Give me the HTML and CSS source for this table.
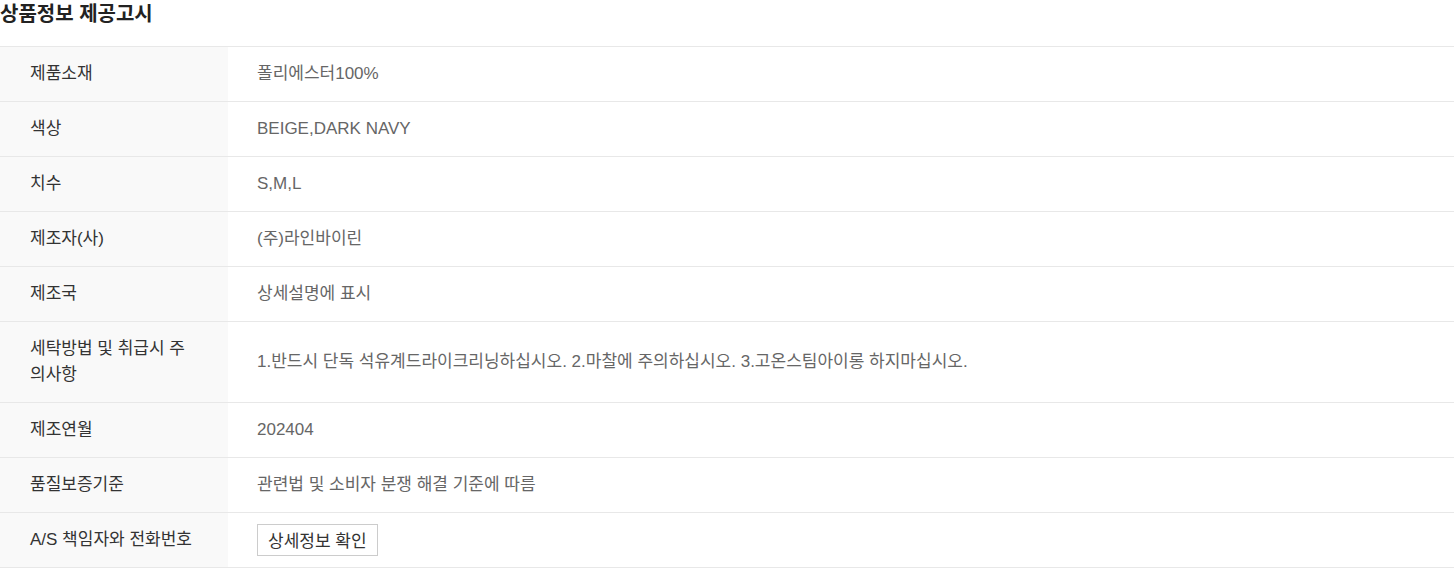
FILE: index.html
```html
<!DOCTYPE html>
<html lang="ko">
<head>
<meta charset="utf-8">
<title>상품정보 제공고시</title>
<link rel="stylesheet" href="styles.css">
</head>
<body>
<section class="notice">
  <h3 class="notice-title">상품정보 제공고시</h3>
  <div class="notice-table">
    <div class="row"><div class="label">제품소재</div><div class="value">폴리에스터100%</div></div>
    <div class="row"><div class="label">색상</div><div class="value">BEIGE,DARK NAVY</div></div>
    <div class="row"><div class="label">치수</div><div class="value">S,M,L</div></div>
    <div class="row"><div class="label">제조자(사)</div><div class="value">(주)라인바이린</div></div>
    <div class="row"><div class="label">제조국</div><div class="value">상세설명에 표시</div></div>
    <div class="row"><div class="label">세탁방법 및 취급시 주의사항</div><div class="value">1.반드시 단독 석유계드라이크리닝하십시오. 2.마찰에 주의하십시오. 3.고온스팀아이롱 하지마십시오.</div></div>
    <div class="row"><div class="label">제조연월</div><div class="value">202404</div></div>
    <div class="row"><div class="label">품질보증기준</div><div class="value">관련법 및 소비자 분쟁 해결 기준에 따름</div></div>
    <div class="row"><div class="label">A/S 책임자와 전화번호</div><div class="value"><button class="detail-btn" type="button">상세정보 확인</button></div></div>
  </div>
</section>
</body>
</html>
```

FILE: styles.css
```css
html, body {
  margin: 0;
  padding: 0;
  background: #fff;
}
body {
  font-family: "Liberation Sans", "Noto Sans CJK KR", sans-serif;
  font-size: 17px;
  color: #333;
}
.notice-title {
  margin: 0 0 18px;
  font-size: 20px;
  line-height: 28px;
  font-weight: 700;
  color: #222;
}
.notice-table {
  border-top: 1px solid #e8e8e8;
}
.row {
  display: grid;
  grid-template-columns: 228px 1fr;
  border-bottom: 1px solid #e8e8e8;
}
.label {
  background: #f9f9f9;
  padding: 14px 28px 14px 30px;
  line-height: 26px;
  color: #333;
  word-break: break-all;
  display: flex;
  align-items: center;
}
.value {
  padding: 0 29px;
  line-height: 26px;
  color: #666;
  display: flex;
  align-items: center;
}
.detail-btn {
  height: 32px;
  padding: 0 10px;
  border: 1px solid #ccc;
  background: #fff;
  font-family: inherit;
  font-size: 17px;
  color: #333;
  margin-top: -1px;
}
```
